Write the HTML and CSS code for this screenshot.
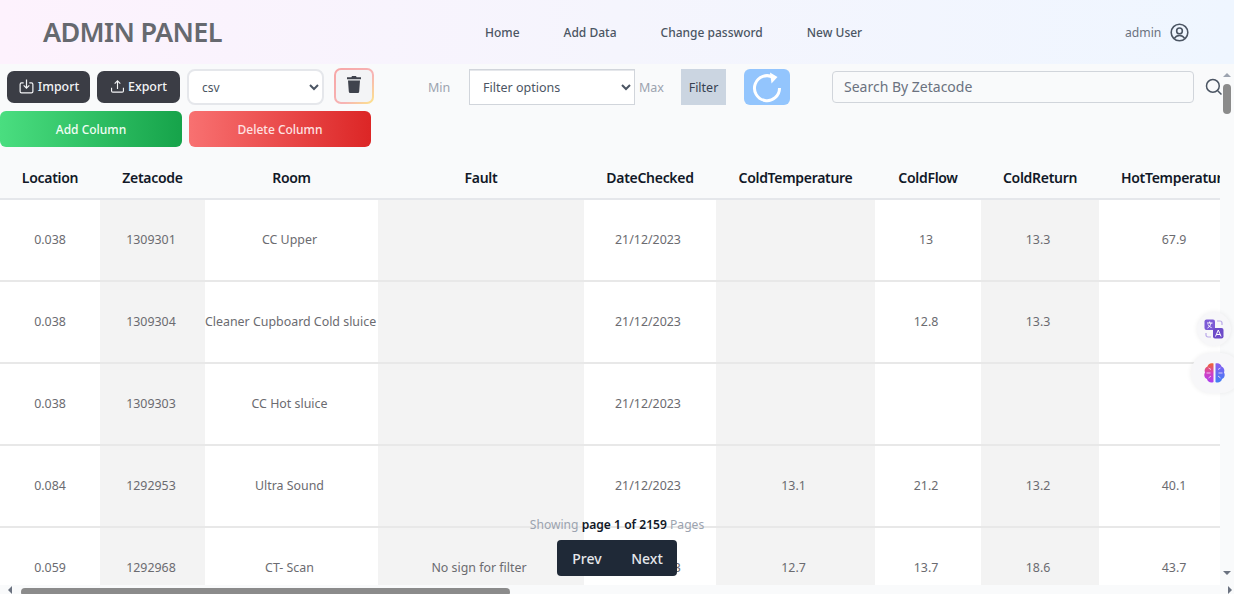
FILE: index.html
```html
<!DOCTYPE html>
<html lang="en">

<head>
    <meta charset="UTF-8">
    <meta name="viewport" content="width=device-width, initial-scale=1.0">
    <title>Admin Panel</title>
    <link rel="stylesheet" href="styles.css">
</head>

<body>
    <header class="topbar">
        <div class="brand">ADMIN PANEL</div>
        <nav class="nav">
            <a>Home</a>
            <a>Add Data</a>
            <a>Change password</a>
            <a>New User</a>
        </nav>
        <div class="user">
            <span>admin</span>
            <svg width="19" height="19" viewBox="0 0 24 24" fill="none" stroke="#4b5563" stroke-width="2">
                <circle cx="12" cy="12" r="10.5" />
                <circle cx="12" cy="10" r="3.6" />
                <path d="M5.5 19.500c1.500-2.600 3.700-3.800 6.500-3.800s5 1.200 6.500 3.800" />
            </svg>
        </div>
    </header>

    <main class="content">
        <section class="tools">
            <div class="tools-row">
                <button class="btn btn-dark btn-import">
                    <svg width="17" height="17" viewBox="0 0 24 24" fill="none" stroke="currentColor" stroke-width="1.7">
                        <path d="M8 7H5a2 2 0 0 0-2 2v10a2 2 0 0 0 2 2h14a2 2 0 0 0 2-2V9a2 2 0 0 0-2-2h-3" />
                        <path d="M12 2v12M8 10.500l4 4 4-4" />
                    </svg>
                    Import
                </button>
                <button class="btn btn-dark btn-export">
                    <svg width="15" height="15" viewBox="0 0 24 24" fill="none" stroke="currentColor" stroke-width="1.8">
                        <path d="M2.500 14v5a2 2 0 0 0 2 2h15a2 2 0 0 0 2-2v-5" />
                        <path d="M12 16V3M7.500 7.500 12 3l4.500 4.500" />
                    </svg>
                    Export
                </button>
                <select class="select select-type">
                    <option>csv</option>
                </select>
                <button class="btn-trash">
                    <svg width="14" height="17" viewBox="0 0 14 17" fill="#3f434d">
                        <path d="M5 0h4l.6 1.300H14v2H0v-2h4.400zM1 4.500h12l-.8 11a1.500 1.500 0 0 1-1.500 1.500H3.300a1.500 1.500 0 0 1-1.500-1.500z" />
                    </svg>
                </button>
                <span class="lbl lbl-min">Min</span>
                <select class="select select-filter">
                    <option>Filter options</option>
                </select>
                <span class="lbl lbl-max">Max</span>
                <button class="btn-filter">Filter</button>
                <button class="btn-refresh">
                    <svg width="32" height="32" viewBox="0 0 32 32" fill="none" stroke="#fff" stroke-width="3">
                        <path d="M22.500 6.500A12.500 12.500 0 1 0 28.500 17" />
                        <path d="M19 1.500l7.500 4.500-6 6.500z" fill="#fff" stroke="none" />
                    </svg>
                </button>
                <input class="search" type="text" placeholder="Search By Zetacode">
                <svg class="search-icon" width="18" height="18" viewBox="0 0 24 24" fill="none" stroke="#4b5563" stroke-width="2">
                    <circle cx="10.500" cy="10.500" r="8.500" />
                    <path d="M17 17l5 5" />
                </svg>
            </div>
            <div class="tools-row tools-row-2">
                <button class="btn-col btn-add">Add Column</button>
                <button class="btn-col btn-del">Delete Column</button>
            </div>
        </section>

        <div class="table-wrap">
            <table class="data">
                <colgroup>
                    <col class="c1">
                    <col class="c2">
                    <col class="c3">
                    <col class="c4">
                    <col class="c5">
                    <col class="c6">
                    <col class="c7">
                    <col class="c8">
                    <col class="c9">
                </colgroup>
                <thead>
                    <tr>
                        <th>Location</th>
                        <th>Zetacode</th>
                        <th>Room</th>
                        <th>Fault</th>
                        <th>DateChecked</th>
                        <th>ColdTemperature</th>
                        <th>ColdFlow</th>
                        <th>ColdReturn</th>
                        <th>HotTemperature</th>
                    </tr>
                </thead>
                <tbody>
                    <tr>
                        <td>0.038</td>
                        <td>1309301</td>
                        <td>CC Upper</td>
                        <td></td>
                        <td>21/12/2023</td>
                        <td></td>
                        <td>13</td>
                        <td>13.3</td>
                        <td>67.9</td>
                    </tr>
                    <tr>
                        <td>0.038</td>
                        <td>1309304</td>
                        <td>Cleaner Cupboard Cold sluice</td>
                        <td></td>
                        <td>21/12/2023</td>
                        <td></td>
                        <td>12.8</td>
                        <td>13.3</td>
                        <td></td>
                    </tr>
                    <tr>
                        <td>0.038</td>
                        <td>1309303</td>
                        <td>CC Hot sluice</td>
                        <td></td>
                        <td>21/12/2023</td>
                        <td></td>
                        <td></td>
                        <td></td>
                        <td></td>
                    </tr>
                    <tr>
                        <td>0.084</td>
                        <td>1292953</td>
                        <td>Ultra Sound</td>
                        <td></td>
                        <td>21/12/2023</td>
                        <td>13.1</td>
                        <td>21.2</td>
                        <td>13.2</td>
                        <td>40.1</td>
                    </tr>
                    <tr>
                        <td>0.059</td>
                        <td>1292968</td>
                        <td>CT- Scan</td>
                        <td>No sign for filter</td>
                        <td>21/12/2023</td>
                        <td>12.7</td>
                        <td>13.7</td>
                        <td>18.6</td>
                        <td>43.7</td>
                    </tr>
                </tbody>
            </table>
        </div>

        <div class="pager">
            <p class="pager-text">Showing <b>page 1 of 2159</b> Pages</p>
            <div class="pager-btns">
                <button>Prev</button>
                <button>Next</button>
            </div>
        </div>

        <div class="fab fab-translate">
            <svg width="20" height="20" viewBox="0 0 20 20">
                <rect x="0.500" y="0.500" width="10.500" height="10.500" rx="2" fill="#7c5bd6" />
                <rect x="9" y="9" width="10.500" height="10.500" rx="2" fill="#6d4bc9" />
                <path d="M3 4h5.500M5.700 2.500V4M3.500 9c2-1 3-3 3.500-5M4 5.500c.6 1.500 2 2.500 3.500 3" fill="none" stroke="#fff" stroke-width="1" />
                <path d="M11.500 17.500l2.800-6.500 2.800 6.500M12.500 15.500h3.600" fill="none" stroke="#fff" stroke-width="1" />
                <path d="M13 2h3a2 2 0 0 1 2 2v2M7 18H4a2 2 0 0 1-2-2v-2" fill="none" stroke="#b9a8e8" stroke-width="1.200" />
            </svg>
        </div>
        <div class="fab fab-brain">
            <svg width="23" height="22" viewBox="0 0 22 22">
                <defs>
                    <linearGradient id="brainLeft" x1="0" y1="0" x2="0" y2="1">
                        <stop offset="0" stop-color="#f0662e" />
                        <stop offset="0.5" stop-color="#d43fc0" />
                        <stop offset="1" stop-color="#a83ff0" />
                    </linearGradient>
                    <linearGradient id="brainRight" x1="0" y1="0" x2="0" y2="1">
                        <stop offset="0" stop-color="#8a5cf0" />
                        <stop offset="1" stop-color="#3f7ff5" />
                    </linearGradient>
                </defs>
                <path d="M10 1.500C7 .5 4.500 2 4 4.500 1.500 5.500.5 8 1.500 10.500 0 13 1 16 3.500 17 4 20 7.500 21.500 10 20z" fill="url(#brainLeft)" />
                <path d="M12 1.500c3-1 5.500.5 6 3 2.500 1 3.500 3.500 2.500 6 1.500 2.500.5 5.500-2 6.500-.5 3-4 4.500-6.500 3z" fill="url(#brainRight)" />
                <path d="M5 6l2.500 1.500M3 11h4M5 16l2.500-2M17 6l-2.500 1.500M19 11h-4M17 16l-2.500-2" fill="none" stroke="#f6e6fa" stroke-width="0.800" />
            </svg>
        </div>

        <!-- barres de defilement -->
        <div class="vscroll">
            <span class="arrow arrow-up"></span>
            <span class="vthumb"></span>
            <span class="arrow arrow-down"></span>
        </div>
        <div class="hscroll">
            <span class="arrow arrow-left"></span>
            <span class="hthumb"></span>
            <span class="arrow arrow-right"></span>
        </div>
    </main>
</body>

</html>
```
FILE: styles.css
```css
* {
    box-sizing: border-box;
}

html,
body {
    margin: 0;
    height: 594px;
    overflow: hidden;
}

body {
    font-family: "Noto Sans", Arial, sans-serif;
    background-color: #f9fafb;
    color: #6b6b70;
}

.topbar {
    height: 64px;
    display: flex;
    align-items: center;
    padding-left: 43px;
    background: linear-gradient(90deg, #fdf2fd 0%, #f5f5fd 50%, #eff6ff 100%);
}

.brand {
    width: 442px;
    padding-bottom: 2px;
    font-size: 27px;
    font-weight: 600;
    letter-spacing: -0.65px;
    color: #66696f;
}

.nav {
    display: flex;
    gap: 44px;
    width: 640px;
    font-size: 12px;
    font-weight: 500;
    color: #4b5563;
}

.user {
    display: flex;
    align-items: center;
    gap: 9px;
    font-size: 12.2px;
    color: #6b7280;
}

.content {
    position: relative;
    height: 530px;
}

.tools {
    height: 93px;
}

.tools-row {
    display: flex;
    align-items: center;
    height: 47px;
    padding: 0 0 1px 7px;
}

.tools-row-2 {
    height: 36px;
    padding: 0;
    gap: 7px;
}

.btn {
    display: flex;
    align-items: center;
    justify-content: center;
    gap: 3px;
    width: 83px;
    height: 32px;
    padding: 0 0 1px;
    border: none;
    border-radius: 7px;
    font-family: inherit;
    font-size: 12.4px;
    font-weight: 500;
}

.btn-dark {
    background-color: #3b3d45;
    color: #f3f4f6;
}

.btn-import,
.btn-export {
    margin-right: 7px;
}

.select {
    height: 36px;
    font-family: inherit;
    font-size: 12.5px;
    color: #4b5563;
    background-color: #fff;
    border: 2px solid #e5e7eb;
}

.select-type {
    width: 137px;
    padding-left: 9px;
    border-radius: 8px;
    font-size: 12px;
}

.btn-trash {
    display: flex;
    align-items: center;
    justify-content: center;
    width: 40px;
    height: 36px;
    margin: -3px 0 0 10px;
    padding: 0 0 2px;
    border: 2px solid transparent;
    border-radius: 7px;
    background: linear-gradient(#f3f4f6, #f3f4f6) padding-box, linear-gradient(135deg, #f7a6a6, #f7b4b4 60%, #fde68a) border-box;
}

.lbl {
    font-size: 12.5px;
    color: #9ca3af;
}

.lbl-min {
    margin-left: 54px;
    width: 41px;
}

.select-filter {
    width: 166px;
    padding-left: 9px;
    border-radius: 0;
    border-width: 1px;
    border-color: #d1d5db;
    box-shadow: 0 1px 0 #e5e7eb inset;
}

.lbl-max {
    margin-left: 4px;
    width: 42px;
}

.btn-filter {
    width: 45px;
    height: 36px;
    padding: 0;
    border: none;
    background-color: #cbd5e1;
    font-family: inherit;
    font-size: 12.5px;
    color: #374151;
}

.btn-refresh {
    display: flex;
    align-items: center;
    justify-content: center;
    width: 46px;
    height: 36px;
    margin-left: 18px;
    padding: 0;
    border: none;
    border-radius: 6px;
    background-color: #93c5fd;
}

.search {
    width: 362px;
    height: 32px;
    margin-left: 42px;
    padding: 0 11px 2px;
    border: 1px solid #d1d5db;
    border-radius: 4px;
    background-color: #f9fafb;
    font-family: inherit;
    font-size: 14px;
    color: #6b7280;
}

.search::placeholder {
    color: #6b7280;
    opacity: 1;
}

.search-icon {
    margin-left: 11px;
    flex: none;
}

.btn-col {
    width: 182px;
    height: 36px;
    border: none;
    border-radius: 6px;
    font-family: inherit;
    font-size: 12px;
    font-weight: 500;
    color: #f0fdf4;
}

.btn-add {
    background: linear-gradient(90deg, #4ade80, #16a34a);
}

.btn-del {
    background: linear-gradient(90deg, #f87171, #dc2626);
    color: #fee2e2;
}

.table-wrap {
    width: 1220px;
    height: 428px;
    overflow: hidden;
}

.data {
    width: 1249px;
    table-layout: fixed;
    border-collapse: collapse;
    font-size: 12.4px;
    text-align: center;
}

.c1 { width: 100px; }
.c2 { width: 105px; }
.c3 { width: 173px; }
.c4 { width: 206px; }
.c5 { width: 132px; }
.c6 { width: 159px; }
.c7 { width: 106px; }
.c8 { width: 118px; }
.c9 { width: 150px; }

th {
    height: 42px;
    padding: 0;
    font-size: 14px;
    font-weight: 600;
    letter-spacing: -0.3px;
    color: #111827;
    border-bottom: 2px solid #e5e7eb;
    white-space: nowrap;
    overflow: hidden;
}

th:last-child {
    text-align: left;
    padding-left: 22px;
}

td {
    height: 82px;
    padding: 0 0 1px;
    background-color: #fff;
    border-bottom: 2px solid #e8e8e8;
    white-space: nowrap;
}

td:nth-child(even) {
    background-color: #f3f3f3;
}

td:nth-child(2) {
    padding-right: 3px;
}

td:nth-child(n+3) {
    padding-right: 4px;
}

td:nth-child(9) {
    padding-right: 0;
}

.pager {
    position: absolute;
    left: 500px;
    top: 452px;
    width: 234px;
    display: flex;
    flex-direction: column;
    align-items: center;
}

.pager-text {
    margin: 0 0 7px;
    height: 17px;
    font-size: 12.1px;
    line-height: 17px;
    color: #9ca3af;
}

.pager-text b {
    font-weight: 600;
    color: #111827;
}

.pager-btns {
    display: flex;
    width: 120px;
    height: 36px;
    border-radius: 4px;
    background-color: #1f2937;
}

.pager-btns button {
    flex: 1;
    padding: 0;
    border: none;
    background: none;
    font-family: inherit;
    font-size: 14px;
    font-weight: 500;
    color: #e5e7eb;
}

.fab {
    position: absolute;
    display: flex;
    align-items: center;
    justify-content: center;
    background-color: #f7f7f9;
    box-shadow: 0 0 5px rgba(0, 0, 0, 0.07);
}

.fab-translate {
    left: 1197px;
    top: 248px;
    width: 34px;
    height: 34px;
    border-radius: 50%;
}

.fab-brain {
    left: 1191px;
    top: 289px;
    width: 50px;
    height: 40px;
    padding-left: 12px;
    border-radius: 20px;
    justify-content: flex-start;
}

.vscroll {
    position: absolute;
    right: 0;
    top: 0;
    width: 14px;
    height: 516px;
    display: flex;
    flex-direction: column;
    align-items: center;
    padding: 9px 0 5px;
}

.vthumb {
    width: 8px;
    height: 30px;
    margin-top: 7px;
    border-radius: 4px;
    background-color: #8b8b8b;
}

.hscroll {
    position: absolute;
    left: 0;
    bottom: 0;
    width: 1234px;
    height: 9px;
    display: flex;
    align-items: center;
    padding: 0 2px 0 8px;
}

.hthumb {
    width: 489px;
    height: 8px;
    margin: 4px 0 0 9px;
    border-radius: 4px;
    background-color: #8b8b8b;
}

.arrow {
    display: block;
    width: 0;
    height: 0;
    border-style: solid;
    border-color: transparent;
}

.arrow-up {
    border-width: 0 4px 4px;
    border-bottom-color: #9ca3af;
}

.arrow-down {
    margin-top: auto;
    border-width: 4px 4px 0;
    border-top-color: #6b7280;
}

.arrow-left {
    border-width: 4px 4px 4px 0;
    border-right-color: #6b7280;
}

.arrow-right {
    margin-left: auto;
    border-width: 4px 0 4px 4px;
    border-left-color: #6b7280;
}
```
